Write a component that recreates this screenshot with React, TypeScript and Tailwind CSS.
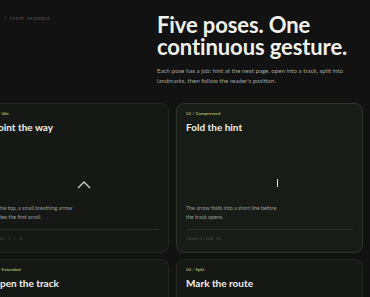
import React from "react";

const sans = { fontFamily: "Lato, 'Noto Sans', sans-serif" };
const mono = { fontFamily: "'DejaVu Sans Mono', 'Liberation Mono', monospace" };

type CardProps = {
  num: string;
  state: string;
  title: string;
  desc?: string[];
  meta?: string;
  icon?: React.ReactNode;
  active?: boolean;
};

function Card({ num, state, title, desc, meta, icon, active }: CardProps) {
  return (
    <div
      className={
        "h-[150px] w-[187px] shrink-0 rounded-[8px] border flex flex-col px-[9px] pt-[7px] pb-[9px] " +
        (active ? "bg-[#181c17] border-[#2d3429]" : "bg-[#161816] border-[#232622]")
      }
    >
      <div className="h-[6px] text-[4.5px] leading-[6px] font-semibold whitespace-nowrap" style={sans}>
        <span className="text-[#9aa88a]">{num} / </span>
        <span className="text-[#b5c76f]">{state}</span>
      </div>
      <div className="mt-[4px] text-[10px] leading-[12px] font-bold text-[#f1f1ea] whitespace-nowrap" style={sans}>
        {title}
      </div>
      <div className="h-[71px] shrink-0 flex justify-center pl-[16px]">{icon}</div>
      {desc && (
        <div className="text-[5.3px] leading-[9px] text-[#9d9f97] whitespace-nowrap" style={sans}>
          {desc.map((d, i) => (
            <div key={i}>{d}</div>
          ))}
        </div>
      )}
      <div className="mt-[7px] border-t border-[#2a2d28]" />
      <div className="mt-[6px] text-[3.8px] leading-[6px] tracking-[0.12em] text-[#4f524c] uppercase whitespace-nowrap" style={mono}>
        {meta}
      </div>
    </div>
  );
}

export default function App() {
  return (
    <div className="w-[370px] h-[297px] overflow-hidden bg-[#121212] flex flex-col">
      <div className="flex h-[103px] shrink-0">
        <div className="w-[157px] shrink-0 pl-[4px] pt-[16px]">
          <div className="text-[4px] leading-[5px] tracking-[0.12em] text-[#5d5f5a] uppercase whitespace-nowrap" style={mono}>
            / State sequence
          </div>
        </div>
        <div className="pt-[14px]">
          <h1 className="text-[22px] leading-[22px] font-bold text-[#f2f2ec] tracking-[-0.005em]" style={sans}>
            Five poses. One
            <br />
            continuous gesture.
          </h1>
          <p className="mt-[8px] text-[6.15px] leading-[9.5px] text-[#a2a49c] whitespace-nowrap" style={sans}>
            Each pose has a job: hint at the next page, open into a track, split into
            <br />
            landmarks, then follow the reader's position.
          </p>
        </div>
      </div>
      <div className="ml-[-18px] grid grid-cols-[189px_187px] gap-x-[5px] gap-y-[6px]">
        <Card
          num="01"
          state="Idle"
          title="Point the way"
          desc={["At the top, a small breathing arrow", "invites the first scroll."]}
          meta="Level Y + 8"
          icon={
            <svg width="14" height="9" viewBox="0 0 14 9" className="mt-[47px]">
              <path d="M1 8 L7 2 L13 8" fill="none" stroke="#cfcfc8" strokeWidth="1.4" />
            </svg>
          }
        />
        <Card
          active
          num="02"
          state="Compressed"
          title="Fold the hint"
          desc={["The arrow folds into a short line before", "the track opens."]}
          meta="Transition 06"
          icon={<div className="mt-[46px] w-[1.5px] h-[8px] bg-[#e2e2dc]" />}
        />
        <Card num="03" state="Extended" title="Open the track" />
        <Card num="04" state="Split" title="Mark the route" />
      </div>
    </div>
  );
}
